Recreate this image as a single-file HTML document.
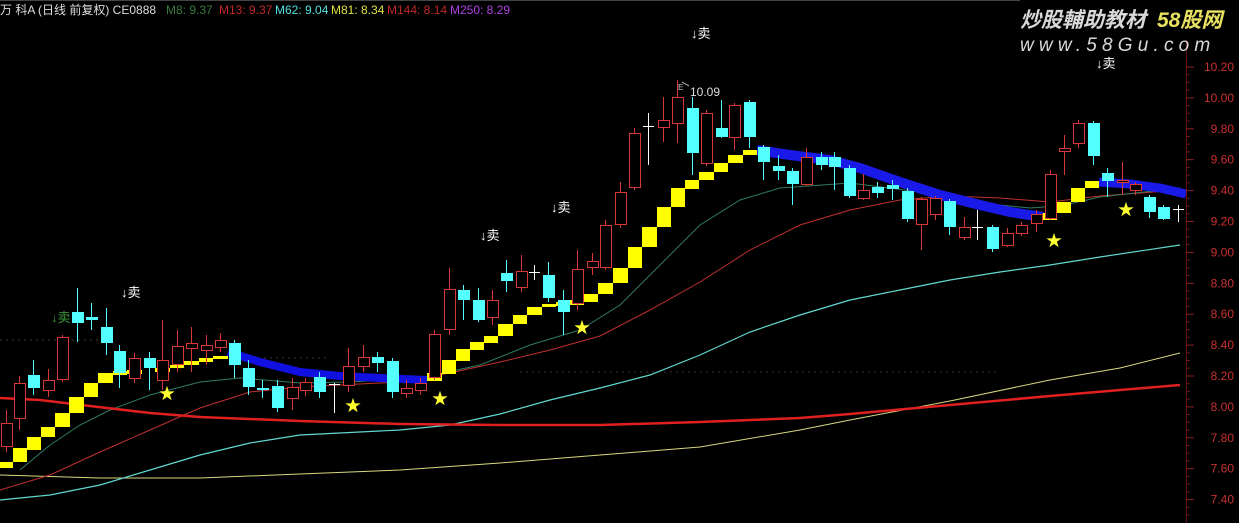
<!DOCTYPE html>
<html><head><meta charset="utf-8"><style>
html,body{margin:0;padding:0;background:#000;width:1239px;height:523px;overflow:hidden}
svg{display:block}
text{font-family:"Liberation Sans","Noto Sans CJK SC",sans-serif}
</style></head><body>
<svg id="s" width="1239" height="523" xmlns="http://www.w3.org/2000/svg">
<rect width="1239" height="523" fill="#000"/>
<line x1="0" y1="0.5" x2="1020" y2="0.5" stroke="#444"/>
<g id="g"></g>
<text x="0" y="14" font-size="12" fill="#ddd">万 科A (日线 前复权) CE0888</text>
<text x="166" y="14" font-size="12" fill="#3a7a3a">M8: 9.37</text>
<text x="219" y="14" font-size="12" fill="#c02828">M13: 9.37</text>
<text x="275" y="14" font-size="12" fill="#50e0e0">M62: 9.04</text>
<text x="331" y="14" font-size="12" fill="#e0e040">M81: 8.34</text>
<text x="387" y="14" font-size="12" fill="#c02828">M144: 8.14</text>
<text x="450" y="14" font-size="12" fill="#b040e0">M250: 8.29</text>
<text x="1020" y="27" font-size="21" font-style="italic" font-weight="bold" fill="#d8d8d8" font-family="'Noto Sans CJK SC',sans-serif">炒股輔助教材</text>
<text x="1157" y="27" font-size="21" font-style="italic" font-weight="bold" fill="#e8e060" font-family="'Noto Sans CJK SC',sans-serif">58股网</text>
<text x="1020" y="51" font-size="19" font-style="italic" fill="#d8d8d8" letter-spacing="5.2">www.58Gu.com</text>
</svg>
<script>
var g=document.getElementById('g'),h='';
function R(x,y,w,hh,f){h+='<rect x="'+x+'" y="'+y+'" width="'+w+'" height="'+hh+'" fill="'+f+'"/>';}
function P(pts,c,w){h+='<polyline fill="none" stroke="'+c+'" stroke-width="'+w+'" points="'+pts+'"/>';}
h+='<line x1="0" y1="340" x2="110" y2="340" stroke="#3a3a3a" stroke-dasharray="2,4"/>';
h+='<line x1="240" y1="358" x2="330" y2="358" stroke="#3a3a3a" stroke-dasharray="2,4"/>';
h+='<line x1="520" y1="372" x2="1000" y2="372" stroke="#333" stroke-dasharray="2,4"/>';
P("0,475 100,478 200,478 300,474 400,470 500,463 600,455 700,447 800,430 850,420 950,401 1050,380 1120,368 1180,353","#d8d880",1);
P("0,500 50,495 100,485 150,470 200,455 250,443 300,435 400,430 450,425 500,414 550,400 600,388 650,375 700,355 750,332 800,315 850,300 900,290 950,280 1000,272 1050,265 1100,257 1180,245","#60d8d0",1.2);
P("0,490 50,475 100,452 150,430 200,408 250,392 300,387 400,382 450,373 500,362 550,350 600,336 650,310 700,282 750,250 800,225 850,210 900,200 950,196 1000,198 1050,202 1100,196 1180,190","#c03030",1);
P("20,470 50,445 80,425 110,410 150,395 200,382 240,378 300,383 350,382 420,378 480,365 530,345 580,330 620,305 660,265 700,225 740,200 780,188 850,183 920,192 980,203 1030,208 1060,206 1100,197 1180,188","#2e7a5e",1);
P("0,398 40,400 90,406 150,413 200,417 300,421 400,424 500,425 600,425 700,422 800,418 850,414 950,405 1050,396 1120,390 1180,385","#e02020",2.5);
P("228,352 260,362 300,372 340,376 380,378 427,380","#1010e0",8);
P("757,150 790,155 830,160 860,168 900,182 940,195 980,205 1010,212 1043,217","#1a1ae8",10);
P("1099,182 1130,184 1160,188 1186,194","#1a1ae8",9);
var Y=[[0,13,462,468],[13,27,448,462],[27,41,437,450],[41,55,427,437],[55,70,413,427],[69,84,397,413],[84,98,383,397],[98,113,373,383],[113,127,371,375],[127,142,370,374],[155,170,368,372],[170,184,365,368],[184,199,361,365],[199,213,358,362],[213,228,356,359],
[427,442,373,381],[442,456,360,374],[456,470,349,361],[470,484,342,350],[484,498,336,343],[498,513,324,336],[513,527,315,324],[527,542,307,315],[542,556,304,307],[556,570,302,306],[570,584,300,305],[584,598,294,302],[598,613,283,294],[613,628,268,283],[628,642,247,268],[642,657,227,247],[657,671,207,227],[671,685,188,207],[685,699,180,189],[699,714,172,180],[714,728,163,172],[728,743,155,163],[743,757,150,155],
[1043,1057,213,220],[1057,1071,202,213],[1071,1085,188,202],[1085,1099,181,188]];
Y.forEach(function(a){R(a[0],a[2],a[1]-a[0],Math.max(a[3]-a[2],3),"#ffff00");});
var C=[[6,423,446,410,452,'r'],[19,383,418,376,430,'r'],[33,375,388,360,395,'c'],[48,380,390,369,397,'r'],[62,337,379,335,382,'r'],[77,312,323,288,342,'c'],[91,317,320,303,330,'c'],[106,327,343,308,355,'c'],[119,351,373,345,388,'c'],[134,358,378,353,383,'r'],[149,358,368,352,390,'c'],[162,360,380,320,390,'r'],[177,346,364,330,372,'r'],[191,343,348,327,372,'r'],[206,345,350,335,365,'r'],[220,340,347,333,352,'r'],[234,343,365,340,378,'c'],[248,368,387,360,395,'c'],[262,388,390,380,398,'c'],[277,386,408,380,412,'c'],[292,387,398,378,410,'r'],[305,382,390,378,396,'r'],[319,377,392,372,398,'c'],[334,384,384,383,413,'w'],[348,366,385,348,392,'r'],[363,357,366,345,372,'r'],[377,357,363,352,372,'c'],[392,361,392,358,398,'c'],[406,388,393,380,398,'r'],[420,383,390,378,395,'r'],[434,334,377,330,380,'r'],[449,289,329,268,335,'r'],[463,290,300,285,320,'c'],[478,300,320,288,322,'c'],[492,300,317,290,325,'r'],[506,273,281,260,292,'c'],[521,271,287,255,292,'r'],[534,272,272,265,280,'w'],[548,275,298,262,302,'c'],[563,300,312,290,335,'c'],[577,269,303,250,310,'r'],[592,261,267,253,275,'r'],[605,225,267,220,270,'r'],[620,192,224,182,228,'r'],[634,133,187,128,190,'r'],[648,126,126,113,165,'w'],[663,120,127,97,142,'r'],[677,97,123,80,143,'r'],[692,108,153,97,175,'c'],[706,113,163,110,166,'r'],[721,128,137,100,138,'c'],[734,105,137,103,150,'r'],[749,102,137,100,148,'c'],[763,147,162,145,180,'c'],[778,166,171,155,180,'c'],[792,171,184,168,205,'c'],[806,157,184,148,186,'r'],[821,157,165,152,170,'c'],[834,157,167,152,190,'c'],[849,168,196,165,198,'c'],[863,190,198,174,200,'r'],[877,187,193,182,198,'c'],[892,185,189,180,200,'c'],[907,191,219,188,222,'c'],[921,199,224,197,250,'r'],[935,198,214,196,220,'r'],[949,201,227,199,235,'c'],[964,227,237,217,240,'r'],[977,227,227,210,240,'w'],[992,227,249,225,252,'c'],[1007,233,245,228,247,'r'],[1021,225,233,222,236,'r'],[1036,214,223,210,232,'r'],[1050,174,218,170,220,'r'],[1064,148,151,135,175,'r'],[1078,123,143,120,148,'r'],[1093,123,156,121,165,'c'],[1107,173,181,168,197,'c'],[1122,180,182,162,195,'r'],[1135,184,190,182,195,'r'],[1149,197,212,195,218,'c'],[1163,207,219,205,220,'c'],[1178,209,209,205,222,'w']];
C.forEach(function(c){var x=c[0],t=c[1],b=c[2];
 if(c[5]=='w'){h+='<line x1="'+x+'.5" y1="'+c[3]+'" x2="'+x+'.5" y2="'+c[4]+'" stroke="#fff"/><line x1="'+(x-5)+'" y1="'+t+'.5" x2="'+(x+6)+'" y2="'+t+'.5" stroke="#fff"/>';return;}
 var col=c[5]=='r'?'#d83838':'#54ffff';
 h+='<line x1="'+x+'.5" y1="'+c[3]+'" x2="'+x+'.5" y2="'+c[4]+'" stroke="'+col+'"/>';
 if(c[5]=='r'){h+='<rect x="'+(x-5)+'.5" y="'+t+'.5" width="11" height="'+Math.max(b-t,1)+'" fill="#000" stroke="'+col+'"/>';}
 else R(x-5,t,12,Math.max(b-t,2),col);
});
[[167,393],[353,405],[440,398],[582,327],[1054,240],[1126,209]].forEach(function(s){h+='<text x="'+s[0]+'" y="'+(s[1]+6)+'" font-size="16" fill="#ffff30" text-anchor="middle">★</text>';});
[[697,38,'#fff'],[1102,68,'#fff'],[557,212,'#fff'],[486,240,'#fff'],[127,297,'#fff'],[57,322,'#3a9a3a']].forEach(function(s){h+='<text x="'+(s[0]-6)+'" y="'+s[1]+'" font-size="13" fill="'+s[2]+'">↓卖</text>';});
h+='<text x="678" y="90" font-size="8" fill="#ccc">E</text><line x1="682" y1="82" x2="689" y2="86" stroke="#ccc"/>';
h+='<text x="690" y="96" font-size="12" fill="#ddd">10.09</text>';
h+='<line x1="1186.5" y1="40" x2="1186.5" y2="523" stroke="#6a1010"/>';
var L=['10.20','10.00','9.80','9.60','9.40','9.20','9.00','8.80','8.60','8.40','8.20','8.00','7.80','7.60','7.40'];
for(var i=0;i<15;i++){var y=67+i*30.9;
 h+='<line x1="1186" y1="'+y+'" x2="1194" y2="'+y+'" stroke="#8a2020"/>';
 for(var k=1;k<4;k++){var yy=y+k*7.7;if(yy<520)h+='<line x1="1186" y1="'+yy+'" x2="1190" y2="'+yy+'" stroke="#6a1818"/>';}
 h+='<text x="1234" y="'+(y+4)+'" font-size="12" fill="#c83030" text-anchor="end">'+L[i]+'</text>';}
g.innerHTML=h;
</script>
</body></html>
